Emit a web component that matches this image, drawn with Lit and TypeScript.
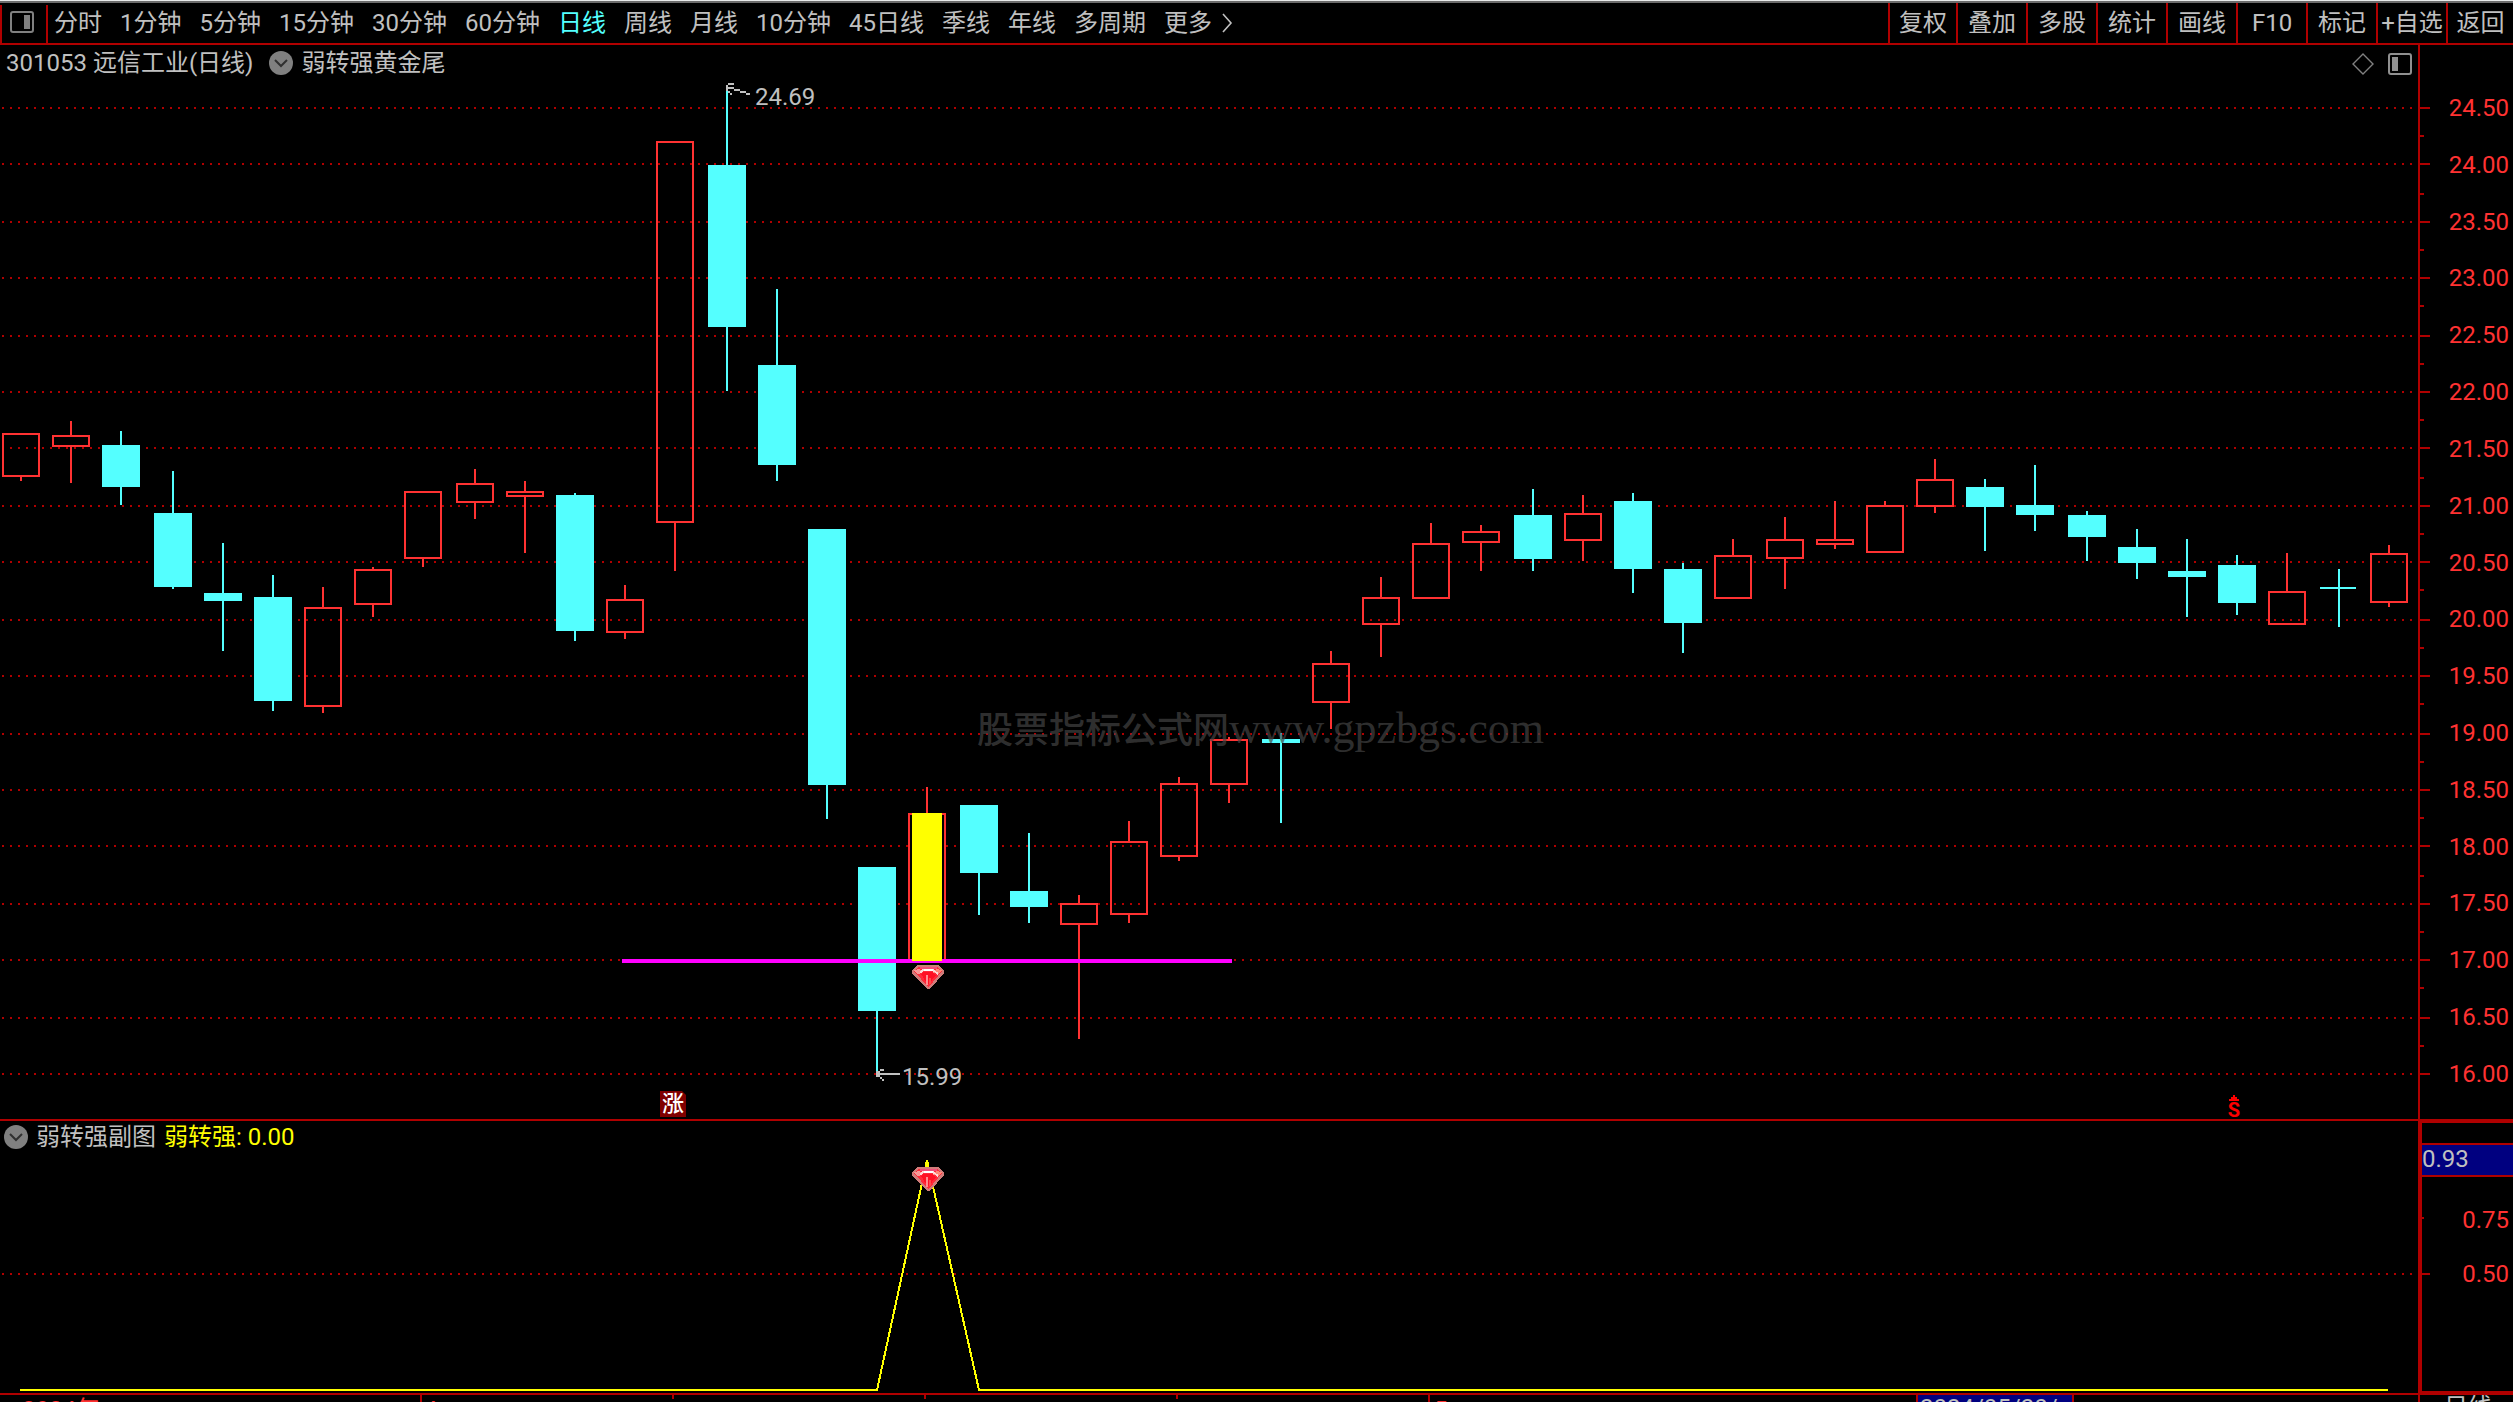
import { LitElement, html, svg, css } from "lit";
import { customElement, state } from "lit/decorators.js";
import { classMap } from "lit/directives/class-map.js";

const PERIODS = [
  "分时", "1分钟", "5分钟", "15分钟", "30分钟", "60分钟", "日线", "周线",
  "月线", "10分钟", "45日线", "季线", "年线", "多周期",
];
const ACTIONS = ["复权", "叠加", "多股", "统计", "画线", "F10", "标记", "+自选", "返回"];

/* Chart canvas: 2418 units wide, main pane rows 45..1119, sub pane rows 1121..1393 */
const W = 2418;
const MAIN_TOP = 45;
const MAIN_H = 1074;
const SUB_TOP = 1121;
const SUB_H = 272;

type Candle = [kind: "up" | "down", high: number, top: number, bottom: number, low: number];

const CANDLES: Candle[] = [
  ["up", 433, 433, 477, 481],
  ["up", 421, 435, 447, 483],
  ["down", 431, 445, 487, 505],
  ["down", 471, 513, 587, 589],
  ["down", 543, 593, 601, 651],
  ["down", 575, 597, 701, 711],
  ["up", 587, 607, 707, 713],
  ["up", 567, 569, 605, 617],
  ["up", 491, 491, 559, 567],
  ["up", 469, 483, 503, 519],
  ["up", 481, 491, 497, 553],
  ["down", 493, 495, 631, 641],
  ["up", 585, 599, 633, 639],
  ["up", 141, 141, 523, 571],
  ["down", 91, 165, 327, 391],
  ["down", 289, 365, 465, 481],
  ["down", 529, 529, 785, 819],
  ["down", 867, 867, 1011, 1073],
  ["up", 787, 813, 961, 961],
  ["down", 805, 805, 873, 915],
  ["down", 833, 891, 907, 923],
  ["up", 895, 903, 925, 1039],
  ["up", 821, 841, 915, 923],
  ["up", 777, 783, 857, 861],
  ["up", 737, 739, 785, 803],
  ["down", 733, 739, 743, 823],
  ["up", 651, 663, 703, 729],
  ["up", 577, 597, 625, 657],
  ["up", 523, 543, 599, 599],
  ["up", 525, 531, 543, 571],
  ["down", 489, 515, 559, 571],
  ["up", 495, 513, 541, 561],
  ["down", 493, 501, 569, 593],
  ["down", 563, 569, 623, 653],
  ["up", 539, 555, 599, 599],
  ["up", 517, 539, 559, 589],
  ["up", 501, 539, 545, 549],
  ["up", 501, 505, 553, 553],
  ["up", 459, 479, 507, 513],
  ["down", 479, 487, 507, 551],
  ["down", 465, 505, 515, 531],
  ["down", 511, 515, 537, 561],
  ["down", 529, 547, 563, 579],
  ["down", 539, 571, 577, 617],
  ["down", 555, 565, 603, 615],
  ["up", 553, 591, 625, 625],
  ["down", 569, 587, 589, 627],
  ["up", 545, 553, 603, 607],
];

const BODY = 38;
const candleLeft = (i: number) => 2 + 2 * Math.floor(i * 25.188 + 0.45);

const PRICES = Array.from({ length: 18 }, (_, i) => 24.5 - i * 0.5);
const priceRow = (p: number) => 2 * Math.round((1074 - (p - 16) * 113.65) / 2);

const gem = (x: number, y: number) => svg`
  <g transform="translate(${x} ${y})">
    <polygon points="6,0 26,0 32,5 32,8 18,24 15,24 0,8 0,5" fill="#d07c7a"></polygon>
    <polygon points="7,2 25,2 30,6 17,22 16,22 2,6" fill="#ff2a3a"></polygon>
    <rect x="8" y="2" width="17" height="2" fill="#f0507a"></rect>
    <polygon points="2,5 8,4 10,8 5,9" fill="#f89a98"></polygon>
    <polygon points="24,4 30,5 27,9 21,8" fill="#ff8a78"></polygon>
    <path d="M8 8 L11 5 H21 L26 9" fill="none" stroke="#ffd8d8" stroke-width="2"></path>
    <rect x="12" y="4" width="9" height="2" fill="#ffffff"></rect>
    <polygon points="9,9 12,7 20,7 24,10 17,19 14,17" fill="#ff1024"></polygon>
    <path d="M15 10 V20" stroke="#ff8c90" stroke-width="2"></path>
    <path d="M18 13 V19" stroke="#ff4a48" stroke-width="2"></path>
  </g>`;

const toggleIcon = html`
  <svg class="toggle" viewBox="0 0 24 24" width="24" height="24" aria-hidden="true">
    <circle cx="12" cy="12" r="12" fill="#808080"></circle>
    <path d="M6 9 L12 15 L18 9" fill="none" stroke="#303030" stroke-width="2"></path>
  </svg>`;

@customElement("app-root")
export class AppRoot extends LitElement {
  @state() private period = "日线";

  static styles = css`
    :host {
      --line: #b00000;
      --red: #ff3232;
      --cyan: #54ffff;
      --grey: #c0c0c0;
      display: grid;
      grid-template-rows: 3px 42px minmax(0, 1076fr) minmax(0, 274fr) 7px;
      height: 100vh;
      overflow: hidden;
      background: #000;
      color: var(--grey);
      font-family: Roboto, "Noto Sans CJK SC", sans-serif;
      font-size: 24px;
      font-weight: 400;
      line-height: 24px;
    }
    * { box-sizing: border-box; }
    svg { display: block; }
    button {
      margin: 0;
      padding: 0;
      border: 0;
      background: none;
      color: inherit;
      font: inherit;
      white-space: nowrap;
    }
    .strip {
      background: #6c6c6c;
      border-top: 1px solid #e8eaea;
    }
    .toolbar {
      display: flex;
      min-width: 0;
      border-bottom: 2px solid var(--line);
    }
    .side {
      display: flex;
      align-items: center;
      justify-content: center;
      width: 48px;
      margin-top: 2px;
      padding: 0 4px 4px 0;
      border-left: 2px solid var(--line);
      border-right: 2px solid var(--line);
    }
    .periods {
      display: flex;
      flex: 1;
      align-items: center;
      gap: 18px;
      min-width: 0;
      padding: 0 6px;
    }
    .period.active {
      color: var(--cyan);
    }
    .more {
      display: flex;
      align-items: center;
      gap: 10px;
    }
    .actions {
      display: grid;
      grid-template-columns: 68px repeat(7, 70px) 67px;
    }
    .action {
      border-left: 2px solid var(--line);
    }
    .pane {
      display: grid;
      grid-template-columns: minmax(0, 1fr) 95px;
      min-height: 0;
      border-bottom: 2px solid var(--line);
    }
    .plot {
      position: relative;
      min-width: 0;
      min-height: 0;
    }
    .canvas {
      width: 100%;
      height: 100%;
    }
    .caption {
      position: absolute;
      top: 6px;
      left: 6px;
      display: flex;
      align-items: center;
      gap: 8px;
    }
    .caption.sub {
      top: 4px;
      left: 4px;
    }
    .stock { margin-right: 8px; }
    .value { color: #ffff00; }
    .tools {
      position: absolute;
      top: 8px;
      right: 6px;
      display: flex;
      gap: 14px;
    }
    .mark {
      position: absolute;
    }
    .rise {
      bottom: 2px;
      width: 26px;
      height: 26px;
      background: #800000;
      color: #fff;
      font-size: 22px;
      font-weight: 500;
      line-height: 26px;
      text-align: center;
      clip-path: polygon(0 0, 22px 0, 26px 4px, 26px 100%, 0 100%);
    }
    .sell {
      bottom: 2px;
      display: grid;
      justify-items: center;
      gap: 2px;
      width: 14px;
      color: #ff0000;
      font-size: 20px;
      font-weight: 700;
      line-height: 14px;
    }
    .watermark {
      position: absolute;
      top: 660px;
      left: 977px;
      display: flex;
      align-items: baseline;
      color: rgba(68, 68, 68, 0.7);
      font-family: "Liberation Serif", "Noto Sans CJK SC", serif;
      font-size: 36px;
      font-weight: 500;
      line-height: 48px;
      white-space: nowrap;
    }
    .site { font-size: 44px; }
    .scale {
      display: flex;
      min-height: 0;
      border-left: 2px solid var(--line);
      color: var(--red);
    }
    .ticks {
      width: 12px;
      height: 100%;
    }
    .prices {
      display: flex;
      flex: 1;
      flex-direction: column;
      justify-content: space-between;
      padding: 51px 4px 33px 0;
      text-align: right;
    }
    .subscale {
      position: relative;
      display: flex;
      flex-direction: column;
      padding-top: 20px;
      border: solid var(--line);
      border-width: 2px 0 2px 4px;
      color: var(--red);
      text-align: right;
    }
    .level { padding: 31px 4px 0 0; }
    .level + .level { padding-top: 30px; }
    .cursor {
      height: 34px;
      padding-top: 2px;
      border: solid var(--line);
      border-width: 2px 0;
      background: #000080;
      color: var(--grey);
      text-align: left;
    }
    .subticks {
      position: absolute;
      top: 0;
      left: 0;
      width: 8px;
      height: 100%;
    }
    .dates {
      display: grid;
      grid-template-columns: minmax(0, 1fr) 95px;
      overflow: hidden;
    }
    .timeline {
      position: relative;
      overflow: hidden;
    }
    .tick {
      position: absolute;
      top: 0;
      width: 2px;
      height: 4px;
      background: var(--line);
    }
    .tick.tall { height: 7px; }
    .date {
      position: absolute;
      top: 3px;
      color: var(--red);
    }
    .today {
      position: absolute;
      top: 0;
      width: 158px;
      height: 30px;
      padding: 1px 0 0 2px;
      border: solid var(--line);
      border-width: 0 2px;
      background: #000080;
      white-space: nowrap;
    }
    .unit {
      border-left: 2px solid var(--line);
      padding-left: 24px;
      white-space: nowrap;
    }
  `;

  private pct(x: number) {
    return `left:${((x / W) * 100).toFixed(3)}%`;
  }

  private at(x: number, y: number) {
    return `${this.pct(x)};top:${(((y - MAIN_TOP) / MAIN_H) * 100).toFixed(3)}%`;
  }

  private dots(y: number) {
    return svg`<line x1="2" x2="2412" y1=${y} y2=${y} stroke="#b00000" stroke-width="2" stroke-dasharray="2 6"></line>`;
  }

  private candle([kind, high, top, bottom, low]: Candle, i: number) {
    const x = candleLeft(i);
    const cx = x + BODY / 2;
    const color = kind === "up" ? "#ff3232" : "#54ffff";
    return svg`
      <path d="M${cx} ${high}V${top}M${cx} ${bottom}V${low}" stroke=${color} stroke-width="2"></path>
      ${kind === "up"
        ? svg`<rect x=${x + 1} y=${top + 1} width=${BODY - 2} height=${bottom - top - 2} fill="none" stroke=${color} stroke-width="2"></rect>`
        : svg`<rect x=${x} y=${top} width=${bottom - top > 2 ? BODY : BODY - 2} height=${bottom - top} fill=${color}></rect>`}`;
  }

  private renderToolbar() {
    return html`
      <header class="toolbar">
        <button class="side" aria-label="侧栏">
          <svg viewBox="0 0 24 22" width="24" height="22" aria-hidden="true">
            <rect x="1" y="1" width="22" height="20" rx="2" fill="none" stroke="#808080" stroke-width="2"></rect>
            <rect x="14" y="4" width="6" height="14" fill="#808080"></rect>
          </svg>
        </button>
        <nav class="periods">
          ${PERIODS.map(
            (p) => html`<button
              class=${classMap({ period: true, active: p === this.period })}
              @click=${() => (this.period = p)}
            >${p}</button>`
          )}
          <button class="more">更多
            <svg viewBox="0 0 12 20" width="12" height="20" aria-hidden="true">
              <path d="M1 1 L9 10 L1 19" fill="none" stroke="#c0c0c0" stroke-width="1.6"></path>
            </svg>
          </button>
        </nav>
        <div class="actions">
          ${ACTIONS.map((a) => html`<button class="action">${a}</button>`)}
        </div>
      </header>`;
  }

  private renderMain() {
    return html`
      <section class="pane">
        <div class="plot">
          <svg class="canvas" viewBox="0 ${MAIN_TOP} ${W} ${MAIN_H}" preserveAspectRatio="none" shape-rendering="crispEdges">
            ${PRICES.map((p) => this.dots(priceRow(p)))}
            ${CANDLES.map((c, i) => this.candle(c, i))}
            <rect x="622" y="959" width="610" height="4" fill="#ff00ff"></rect>
            <rect x="912" y="813" width="30" height="148" fill="#ffff00"></rect>
            <path fill="#c0c0c0" d="M728 83h6v2h-6zM726 85h2v6h-2zM728 87h6v2h-6zM734 89h6v2h-6zM740 91h6v2h-6zM746 93h4v2h-4zM728 91h2v2h-2zM730 93h2v2h-2z"></path>
            <path fill="#c0c0c0" d="M876 1071h4v6h-4zM880 1073h20v2h-20zM880 1069h4v2h-4zM880 1077h2v2h-2zM882 1079h2v2h-2z"></path>
            ${gem(912, 965)}
          </svg>
          <div class="watermark"><span>股票指标公式网</span><span class="site">www.gpzbgs.com</span></div>
          <div class="caption">
            <span class="stock">301053 远信工业(日线)</span>
            ${toggleIcon}
            <span>弱转强黄金尾</span>
          </div>
          <div class="tools">
            <svg viewBox="0 0 22 22" width="22" height="22" aria-hidden="true">
              <path d="M11 1 L21 11 L11 21 L1 11 Z" fill="none" stroke="#808080" stroke-width="1.4"></path>
            </svg>
            <svg viewBox="0 0 24 22" width="24" height="22" aria-hidden="true">
              <rect x="1" y="1" width="22" height="20" rx="2" fill="none" stroke="#909090" stroke-width="2"></rect>
              <rect x="4" y="4" width="6" height="14" fill="#909090"></rect>
            </svg>
          </div>
          <span class="mark" style=${this.at(755, 85)}>24.69</span>
          <span class="mark" style=${this.at(902, 1065)}>15.99</span>
          <span class="mark rise" style=${this.pct(660)}>涨</span>
          <span class="mark sell" style=${this.pct(2227)}>
            <svg viewBox="0 0 10 6" width="10" height="6" aria-hidden="true">
              <path d="M4 0h2v2h2v2h2v2H0V4h2V2h2z" fill="#ff0000"></path>
            </svg>
            S
          </span>
        </div>
        <div class="scale">
          <svg class="ticks" viewBox="0 ${MAIN_TOP} 12 ${MAIN_H}" preserveAspectRatio="none" shape-rendering="crispEdges">
            ${PRICES.map((p, i) => svg`
              <rect x="0" y=${priceRow(p) - 1} width="10" height="2" fill="#b00000"></rect>
              ${i < PRICES.length - 1
                ? svg`<rect x="0" y=${priceRow(p - 0.25) - 1} width="4" height="2" fill="#b00000"></rect>`
                : ""}`)}
          </svg>
          <div class="prices">${PRICES.map((p) => html`<span>${p.toFixed(2)}</span>`)}</div>
        </div>
      </section>`;
  }

  private renderSub() {
    return html`
      <section class="pane">
        <div class="plot">
          <svg class="canvas" viewBox="0 ${SUB_TOP} ${W} ${SUB_H}" preserveAspectRatio="none" shape-rendering="crispEdges">
            ${this.dots(1274)}
            <polyline points="20,1390 877,1390 927,1160 979,1390 2388,1390" fill="none" stroke="#ffff00" stroke-width="2"></polyline>
            ${gem(912, 1167)}
          </svg>
          <div class="caption sub">
            ${toggleIcon}
            <span>弱转强副图</span>
            <span class="value">弱转强: 0.00</span>
          </div>
        </div>
        <div class="subscale">
          <svg class="subticks" viewBox="0 1123 8 268" preserveAspectRatio="none" shape-rendering="crispEdges">
            <rect x="0" y="1217" width="2" height="2" fill="#b00000"></rect>
            <rect x="0" y="1273" width="8" height="2" fill="#b00000"></rect>
          </svg>
          <div class="cursor">0.93</div>
          <div class="level">0.75</div>
          <div class="level">0.50</div>
        </div>
      </section>`;
  }

  private renderDates() {
    return html`
      <footer class="dates">
        <div class="timeline">
          <i class="tick tall" style=${this.pct(420)}></i>
          <i class="tick" style=${this.pct(672)}></i>
          <i class="tick" style=${this.pct(924)}></i>
          <i class="tick" style=${this.pct(1176)}></i>
          <i class="tick tall" style=${this.pct(1428)}></i>
          <span class="date" style=${this.pct(22)}>2024年</span>
          <span class="date" style=${this.pct(424)}>4</span>
          <span class="date" style=${this.pct(1434)}>5</span>
          <span class="today" style=${this.pct(1916)}>2024/05/20/一</span>
        </div>
        <span class="unit">日线</span>
      </footer>`;
  }

  render() {
    return html`
      <div class="strip"></div>
      ${this.renderToolbar()} ${this.renderMain()} ${this.renderSub()} ${this.renderDates()}
    `;
  }
}
